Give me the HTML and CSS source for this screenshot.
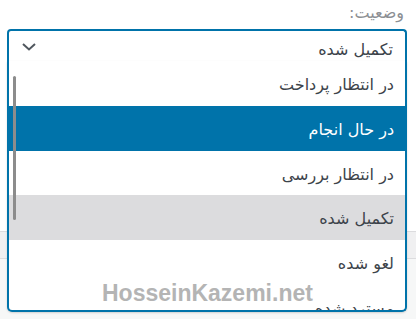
FILE: index.html
```html
<!DOCTYPE html>
<html lang="fa" dir="rtl">
<head>
    <meta charset="UTF-8">
    <meta name="viewport" content="width=device-width, initial-scale=1.0">
    <title>وضعیت سفارش</title>
    <link rel="stylesheet" href="styles.css">
</head>
<body>
    <div class="page">
        <div class="field">
            <label class="field-label">وضعیت:</label>
            <div class="select open">
                <div class="select-current">
                    <span>تکمیل شده</span>
                    <svg class="chevron" width="14" height="8" viewBox="0 0 14 8">
                        <polyline points="1,1 7,6.5 13,1" fill="none" stroke="#50575e" stroke-width="2"/>
                    </svg>
                </div>

                <!-- لیست باز شده روی بقیه محتوا -->
                <ul class="select-list">
                    <li class="option">در انتظار پرداخت</li>
                    <li class="option selected">در حال انجام</li>
                    <li class="option">در انتظار بررسی</li>
                    <li class="option hover">تکمیل شده</li>
                    <li class="option">لغو شده</li>
                    <li class="option">مسترد شده</li>
                    <div class="scroll-thumb"></div>
                </ul>
            </div>
        </div>

        <div class="band"></div>
        <div class="rest"></div>

        <div class="watermark">HosseinKazemi.net</div>
    </div>
</body>
</html>
```

FILE: styles.css
```css
* {
    margin: 0;
    padding: 0;
    box-sizing: border-box;
    font-family: 'DejaVu Sans', 'Noto Sans', Tahoma, sans-serif;
}

body {
    background: #fff;
    color: #3c434a;
    width: 416px;
    height: 322px;
    overflow: hidden;
}

.page {
    position: relative;
    height: 322px;
}

.field {
    padding: 3px 12px 0 10px;
    position: relative;
    z-index: 2;
}

.field-label {
    display: block;
    font-size: 16px;
    line-height: 20px;
    color: #8c8f94;
    margin-bottom: 6px;
}

.select {
    position: relative;
    margin-left: -3px;
    margin-right: -3px;
}

.select-current {
    display: flex;
    justify-content: space-between;
    align-items: center;
    height: 32px;
    padding: 7px 12px 0 12px;
    border: 2px solid #0073aa;
    border-bottom: none;
    border-radius: 4px 4px 0 0;
    background: #fff;
    font-size: 16px;
    line-height: 24px;
}

.chevron {
    margin-left: 1px;
    margin-top: -6px;
}

.select-list {
    position: absolute;
    top: 32px;
    left: 0;
    right: 0;
    height: 251px;
    overflow: hidden;
    list-style: none;
    background: #fff;
    border: 2px solid #0073aa;
    border-top: none;
    border-radius: 0 0 5px 5px;
    box-shadow: 0 1px 2px rgba(0, 0, 0, 0.15);
}

.option {
    height: 44.75px;
    line-height: 40px;
    padding: 4px 11px 0;
    font-size: 16px;
    white-space: nowrap;
}

.option.selected {
    background: #0073aa;
    color: #fff;
}

.option.hover {
    background: #dcdcde;
}

.scroll-thumb {
    position: absolute;
    left: 4px;
    top: 15px;
    width: 3px;
    height: 144px;
    border-radius: 2px;
    background: #8c8c8c;
}

.band {
    margin-top: 170px;
    height: 28px;
    background: #f0f0f1;
    border-top: 1px solid #dcdcde;
    border-bottom: 1px solid #dcdcde;
}

.rest {
    height: 60px;
    background: #f6f7f7;
}

.watermark {
    position: absolute;
    left: 102px;
    top: 280px;
    z-index: 3;
    direction: ltr;
    font-family: 'Liberation Sans', Arial, sans-serif;
    font-weight: 700;
    font-size: 23px;
    color: #b4b4b4;
}
```
